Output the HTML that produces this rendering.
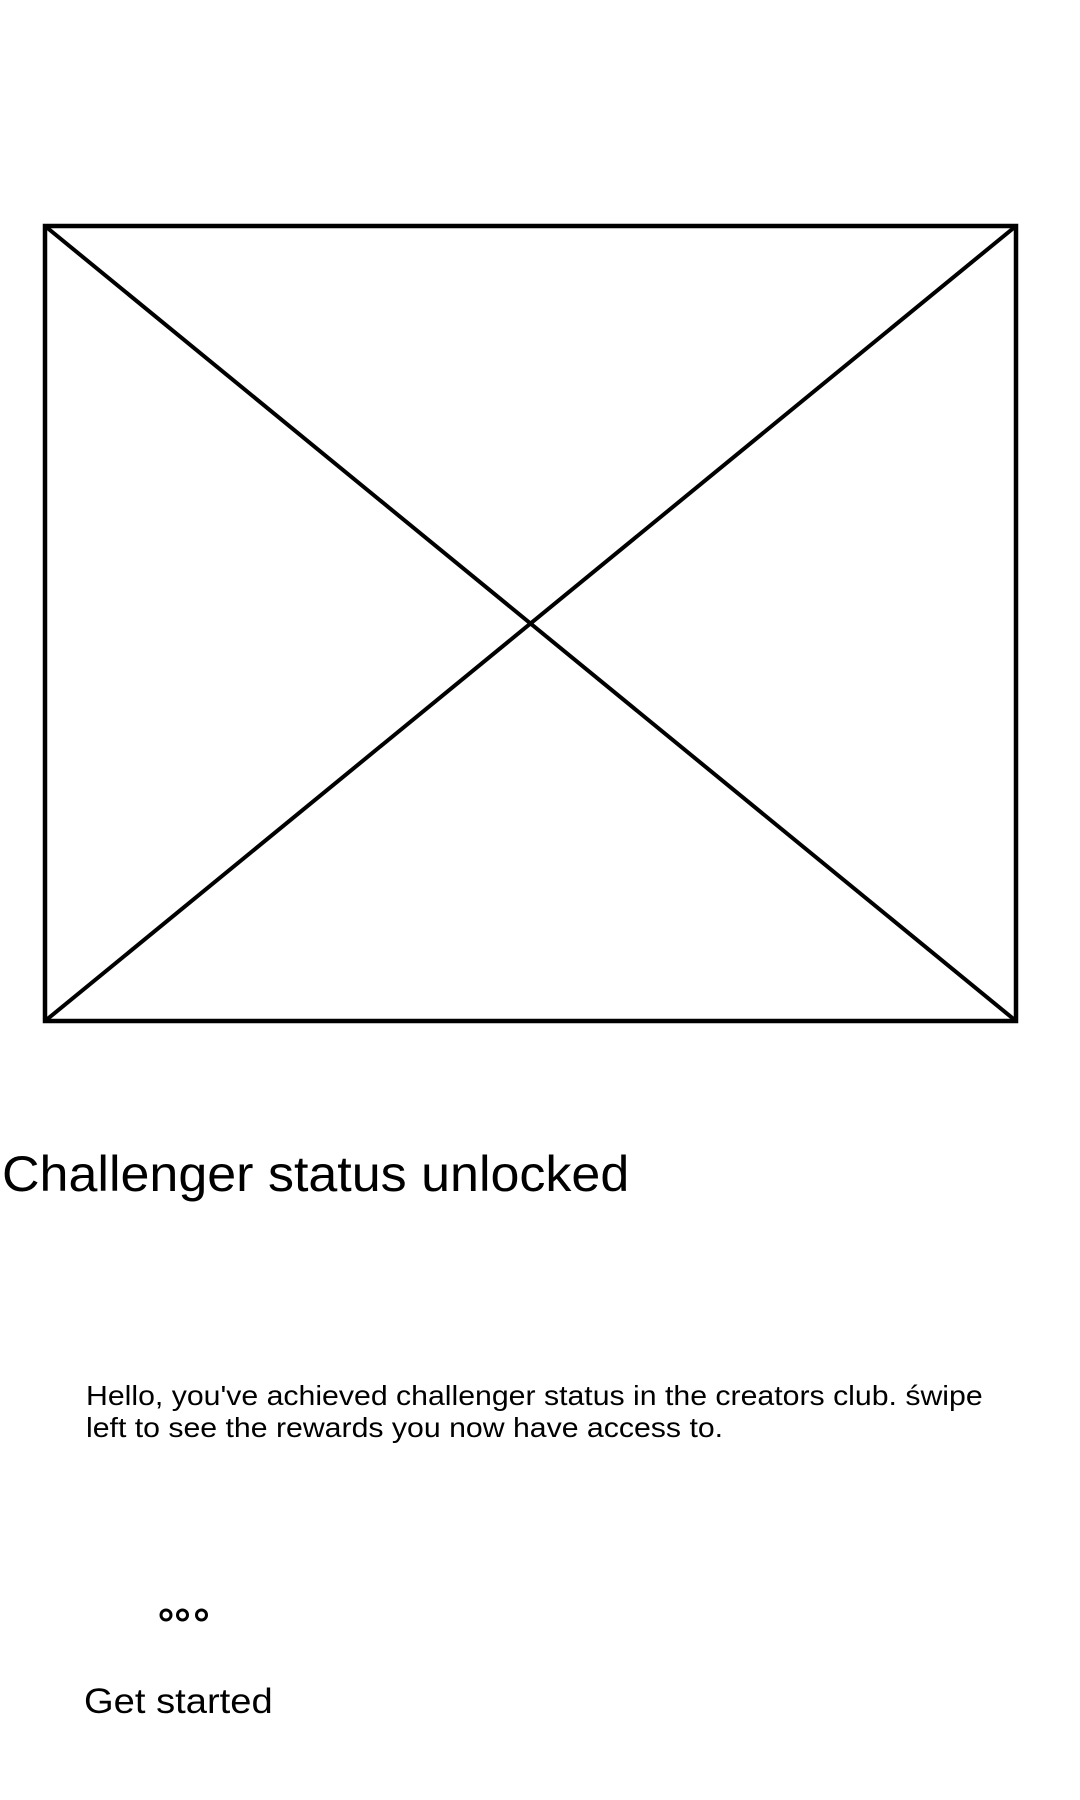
<!DOCTYPE html>
<html><head><meta charset="utf-8"><style>
html,body{margin:0;padding:0;background:#fff;width:1080px;height:1800px;overflow:hidden;position:relative;font-family:"Liberation Sans",Arial,sans-serif;color:#000}
.t{position:absolute;white-space:nowrap;margin:0;transform-origin:0 0}
</style></head><body>
<svg width="1080" height="1800" style="position:absolute;left:0;top:0">
<rect x="45" y="226" width="971" height="795" fill="none" stroke="#000" stroke-width="4.5"/>
<line x1="45" y1="226" x2="1016" y2="1021" stroke="#000" stroke-width="4"/>
<line x1="1016" y1="226" x2="45" y2="1021" stroke="#000" stroke-width="4"/>
<circle cx="166" cy="1615" r="5" fill="none" stroke="#000" stroke-width="3"/>
<circle cx="182.5" cy="1615" r="5" fill="none" stroke="#000" stroke-width="3"/>
<circle cx="201.5" cy="1615" r="5" fill="none" stroke="#000" stroke-width="3"/>
</svg>
<div class="t" style="left:2px;top:1149px;font-size:50px;line-height:50px;transform:scaleX(1.04)">Challenger status unlocked</div>
<div class="t" style="left:86px;top:1380px;font-size:28px;line-height:32px;transform:scaleX(1.08)">Hello, you've achieved challenger status in the creators club. świpe<br>left to see the rewards you now have access to.</div>
<div class="t" style="left:84px;top:1684px;font-size:35px;line-height:35px;transform:scaleX(1.09)">Get started</div>
</body></html>
